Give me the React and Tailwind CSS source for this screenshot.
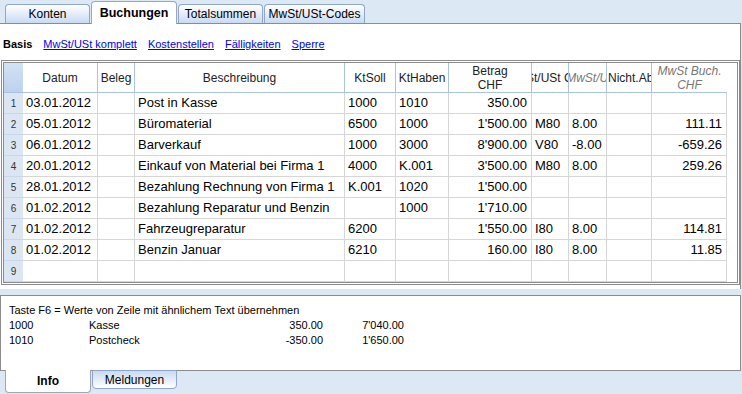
const cols = 'grid-cols-[19px_75px_37px_210px_51px_53px_83px_37px_38px_45px_75px]';

const rows = [
  ['1', '03.01.2012', '', 'Post in Kasse', '1000', '1010', '350.00', '', '', '', ''],
  ['2', '05.01.2012', '', 'Büromaterial', '6500', '1000', "1'500.00", 'M80', '8.00', '', '111.11'],
  ['3', '06.01.2012', '', 'Barverkauf', '1000', '3000', "8'900.00", 'V80', '-8.00', '', '-659.26'],
  ['4', '20.01.2012', '', 'Einkauf von Material bei Firma 1', '4000', 'K.001', "3'500.00", 'M80', '8.00', '', '259.26'],
  ['5', '28.01.2012', '', 'Bezahlung Rechnung von Firma 1', 'K.001', '1020', "1'500.00", '', '', '', ''],
  ['6', '01.02.2012', '', 'Bezahlung Reparatur und Benzin', '', '1000', "1'710.00", '', '', '', ''],
  ['7', '01.02.2012', '', 'Fahrzeugreparatur', '6200', '', "1'550.00", 'I80', '8.00', '', '114.81'],
  ['8', '01.02.2012', '', 'Benzin Januar', '6210', '', '160.00', 'I80', '8.00', '', '11.85'],
  ['9', '', '', '', '', '', '', '', '', '', ''],
];

const rightCols = [6, 10];

function Tab({ label, active }) {
  if (active) {
    return (
      <div className="h-[23px] w-[86px] -mb-[1px] z-10 flex items-center justify-center bg-white border border-b-0 border-[#9aa8b8] rounded-t-[4px] text-[12.5px] font-bold text-black">
        {label}
      </div>
    );
  }
  return (
    <div className="h-[19px] flex items-center justify-center bg-gradient-to-b from-white to-[#c9daf3] border border-b-0 border-[#8ea6c9] rounded-t-[4px] text-[12px] text-black">
      {label}
    </div>
  );
}

function HeaderCell({ children, italic, align = 'center', last }) {
  return (
    <div
      className={`h-[30px] flex flex-col ${align === 'left' ? 'items-start pl-[1px]' : 'items-center'} justify-center overflow-hidden whitespace-nowrap leading-[14px] text-[12px] ${italic ? 'italic text-[#777]' : 'text-[#222]'} ${last ? '' : 'border-r border-[#a9c3e0]'} border-b border-[#a9c3e0]`}
    >
      {children}
    </div>
  );
}

export default function App() {
  return (
    <div className="w-[742px] h-[394px] bg-[#dde8f5] overflow-hidden font-['Liberation_Sans',sans-serif] text-black">
      {/* top tabs */}
      <div className="h-[23px] flex items-end pl-[5px] gap-[1px]">
        <div className="w-[85px]"><Tab label="Konten" /></div>
        <Tab label="Buchungen" active />
        <div className="w-[85px]"><Tab label="Totalsummen" /></div>
        <div className="w-[101px]"><Tab label="MwSt/USt-Codes" /></div>
      </div>

      {/* main panel */}
      <div className="w-[741px] h-[266px] bg-white border-t border-r border-[#8c8c8c] flex flex-col">
        <div className="h-[36px] flex items-center gap-[11px] pl-[3px] pt-[4px] text-[11px]">
          <span className="font-bold">Basis</span>
          <a className="text-[#0000ee] underline">MwSt/USt komplett</a>
          <a className="text-[#0000ee] underline">Kostenstellen</a>
          <a className="text-[#0000ee] underline">Fälligkeiten</a>
          <a className="text-[#0000ee] underline">Sperre</a>
        </div>

        <div className="ml-[1px] w-[739px] h-[225px] border-[3px] border-double border-[#8c8c8c]">
          <div className={`grid ${cols} w-[723px]`}>
            <div className="h-[30px] bg-gradient-to-b from-[#d3e2f4] to-[#bcd2ee] border-b border-[#a9c3e0]" />
            <HeaderCell>Datum</HeaderCell>
            <HeaderCell>Beleg</HeaderCell>
            <HeaderCell>Beschreibung</HeaderCell>
            <HeaderCell>KtSoll</HeaderCell>
            <HeaderCell>KtHaben</HeaderCell>
            <HeaderCell>
              <span>Betrag</span>
              <span>CHF</span>
            </HeaderCell>
            <HeaderCell>MwSt/USt Code</HeaderCell>
            <HeaderCell italic>%MwSt/USt</HeaderCell>
            <HeaderCell align="left">Nicht.Abz.</HeaderCell>
            <HeaderCell italic last>
              <span>MwSt Buch.</span>
              <span>CHF</span>
            </HeaderCell>

            {rows.map((r) =>
              r.map((v, i) =>
                i === 0 ? (
                  <div
                    key={r[0] + '-' + i}
                    className="h-[21px] bg-[#dce6f3] border-b border-[#c8d7ea] flex items-center justify-center text-[10px] text-[#333]"
                  >
                    {v}
                  </div>
                ) : (
                  <div
                    key={r[0] + '-' + i}
                    className={`h-[21px] border-r border-b border-[#d6d6d6] flex items-center overflow-hidden whitespace-nowrap text-[13px] ${rightCols.includes(i) ? 'justify-end pr-[4px]' : 'pl-[3px]'}`}
                  >
                    {v}
                  </div>
                )
              )
            )}
          </div>
        </div>
      </div>

      {/* info panel */}
      <div className="mt-[6px] w-[741px] h-[76px] bg-white border border-[#8c8c8c] pl-[8px] pt-[7px] text-[11px] leading-[15px]">
        <div>Taste F6 = Werte von Zeile mit ähnlichem Text übernehmen</div>
        <div className="flex">
          <span className="w-[80px]">1000</span>
          <span className="w-[148px]">Kasse</span>
          <span className="w-[86px] text-right">350.00</span>
          <span className="w-[81px] text-right">7'040.00</span>
        </div>
        <div className="flex">
          <span className="w-[80px]">1010</span>
          <span className="w-[148px]">Postcheck</span>
          <span className="w-[86px] text-right">-350.00</span>
          <span className="w-[81px] text-right">1'650.00</span>
        </div>
      </div>

      {/* bottom tabs */}
      <div className="flex items-start pl-[5px] gap-[1px] -mt-[1px]">
        <div className="w-[86px] h-[23px] bg-white border border-t-0 border-[#9aa8b8] rounded-b-[4px] flex items-center justify-center text-[12px] font-bold z-10">
          Info
        </div>
        <div className="w-[85px] h-[19px] bg-gradient-to-t from-white to-[#c9daf3] border border-[#8ea6c9] rounded-b-[4px] flex items-center justify-center text-[12px]">
          Meldungen
        </div>
      </div>
    </div>
  );
}
